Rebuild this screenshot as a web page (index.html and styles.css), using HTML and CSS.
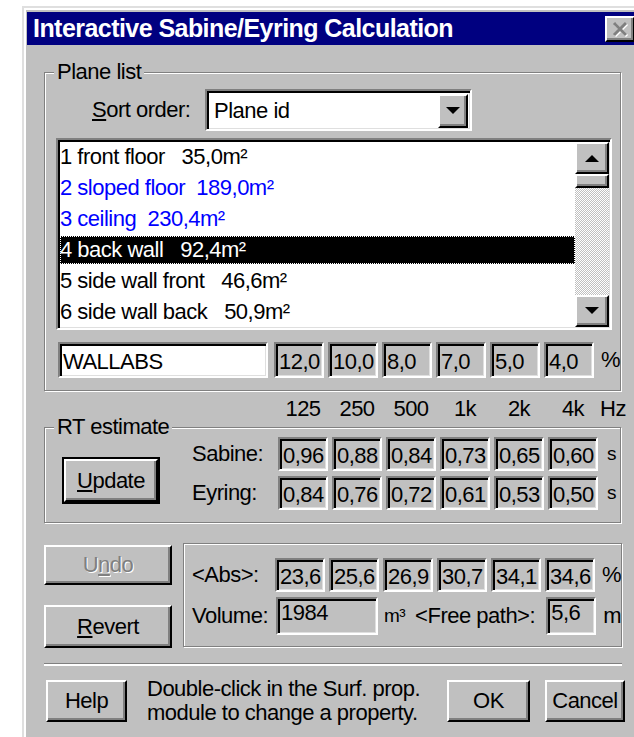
FILE: index.html
```html
<!DOCTYPE html>
<html lang="en">
<head>
<meta charset="utf-8">
<title>Interactive Sabine/Eyring Calculation</title>
<link rel="stylesheet" href="styles.css">
</head>
<body>
<div class="window">
  <div class="titlebar">
    <span class="title">Interactive Sabine/Eyring Calculation</span>
    <span class="btn close">
      <svg width="18" height="16" viewBox="0 0 18 16">
        <path d="M3 2 L15 14 M15 2 L3 14" stroke="#fff" stroke-width="3" transform="translate(1 1)"/>
        <path d="M3 2 L15 14 M15 2 L3 14" stroke="#808080" stroke-width="3"/>
      </svg>
    </span>
  </div>

  <div class="client">
    <fieldset class="group plane">
      <legend>Plane list</legend>
      <div class="sort-row">
        <span class="sort-label"><u>S</u>ort order:</span>
        <div class="combo sunken">
          <span class="combo-text">Plane id</span>
          <span class="btn drop">
            <svg width="14" height="8" viewBox="0 0 14 8"><polygon points="0,0 14,0 7,7" fill="#000"/></svg>
          </span>
        </div>
      </div>

      <div class="listbox sunken">
        <ul class="items">
          <li>1 front floor   35,0m²</li>
          <li class="marked">2 sloped floor  189,0m²</li>
          <li class="marked">3 ceiling  230,4m²</li>
          <li class="selected">4 back wall   92,4m²</li>
          <li>5 side wall front   46,6m²</li>
          <li>6 side wall back   50,9m²</li>
        </ul>
        <div class="scrollbar">
          <span class="btn arrow">
            <svg width="14" height="8" viewBox="0 0 14 8"><polygon points="0,8 14,8 7,1" fill="#000"/></svg>
          </span>
          <span class="btn thumb"></span>
          <span class="track"></span>
          <span class="btn arrow">
            <svg width="14" height="8" viewBox="0 0 14 8"><polygon points="0,0 14,0 7,7" fill="#000"/></svg>
          </span>
        </div>
      </div>

      <div class="value-row material-row">
        <div class="field edit name">WALLABS</div>
        <div class="cells">
          <div class="field">12,0</div>
          <div class="field">10,0</div>
          <div class="field">8,0</div>
          <div class="field">7,0</div>
          <div class="field">5,0</div>
          <div class="field">4,0</div>
        </div>
        <span class="unit">%</span>
      </div>
    </fieldset>

    <div class="freq-row">
      <div class="cells freqs">
        <span>125</span><span>250</span><span>500</span><span>1k</span><span>2k</span><span>4k</span>
      </div>
      <span class="unit hz">Hz</span>
    </div>

    <fieldset class="group rt">
      <legend>RT estimate</legend>
      <div class="rt-body">
        <span class="btn push default"><u>U</u>pdate</span>
        <div class="rt-rows">
          <div class="value-row">
            <span class="row-label">Sabine:</span>
            <div class="cells">
              <div class="field">0,96</div>
              <div class="field">0,88</div>
              <div class="field">0,84</div>
              <div class="field">0,73</div>
              <div class="field">0,65</div>
              <div class="field">0,60</div>
            </div>
            <span class="unit small">s</span>
          </div>
          <div class="value-row">
            <span class="row-label">Eyring:</span>
            <div class="cells">
              <div class="field">0,84</div>
              <div class="field">0,76</div>
              <div class="field">0,72</div>
              <div class="field">0,61</div>
              <div class="field">0,53</div>
              <div class="field">0,50</div>
            </div>
            <span class="unit small">s</span>
          </div>
        </div>
      </div>
    </fieldset>

    <div class="lower">
      <div class="side-buttons">
        <span class="btn push disabled">U<u>n</u>do</span>
        <span class="btn push revert"><u>R</u>evert</span>
      </div>
      <div class="summary">
        <div class="value-row">
          <span class="row-label">&lt;Abs&gt;:</span>
          <div class="cells">
            <div class="field">23,6</div>
            <div class="field">25,6</div>
            <div class="field">26,9</div>
            <div class="field">30,7</div>
            <div class="field">34,1</div>
            <div class="field">34,6</div>
          </div>
          <span class="unit">%</span>
        </div>
        <div class="value-row volume-row">
          <span class="row-label">Volume:</span>
          <div class="field volume">1984</div>
          <span class="m3">m³</span>
          <span class="path-label">&lt;Free path&gt;:</span>
          <div class="field path">5,6</div>
          <span class="unit">m</span>
        </div>
      </div>
    </div>

    <div class="separator"></div>

    <div class="footer">
      <span class="btn push help">Help</span>
      <p class="hint">Double-click in the Surf. prop.<br>module to change a property.</p>
      <span class="btn push ok">OK</span>
      <span class="btn push cancel">Cancel</span>
    </div>
  </div>
</div>
</body>
</html>
```

FILE: styles.css
```css
* {
  box-sizing: border-box;
}

html,
body {
  margin: 0;
  background: #fff;
  overflow: hidden;
}

body {
  width: 634px;
  height: 737px;
  font-family: "Liberation Sans", Arial, sans-serif;
  font-size: 22px;
  letter-spacing: -0.5px;
  white-space: nowrap;
  color: #000;
}

u {
  text-decoration-thickness: 2px;
  text-underline-offset: 2px;
}

/* ---- window frame ---- */
.window {
  margin: 6px 0 0 22px;
  width: 620px;
  height: 740px;
  padding: 4px 3px;
  background: #c0c0c0;
  border: 2px solid;
  border-color: #dfdfdf #000 #000 #dfdfdf;
  box-shadow: inset 2px 2px 0 #fff, inset -2px -2px 0 #808080;
}

.titlebar {
  height: 33px;
  padding-left: 6px;
  display: flex;
  align-items: center;
  justify-content: space-between;
  background: #000080;
  color: #fff;
}

.title {
  font-weight: bold;
  font-size: 25px;
  letter-spacing: -0.55px;
}

/* ---- 3D bevels ---- */
.btn {
  display: flex;
  align-items: center;
  justify-content: center;
  background: #c0c0c0;
  border: 2px solid;
  border-color: #fff #000 #000 #fff;
  box-shadow: inset -2px -2px 0 #808080;
}

.sunken {
  border: 2px solid;
  border-color: #808080 #fff #fff #808080;
  box-shadow: inset 2px 2px 0 #000, inset -1px -1px 0 #dfdfdf;
}

.close {
  width: 30px;
  height: 26px;
  margin-right: 2px;
}

/* ---- client area ---- */
.client {
  padding: 17px 0 0 17px;
}

.group {
  margin: 0;
  padding: 0;
  width: 577px;
  border: 1px solid #808080;
  box-shadow: inset 1px 1px 0 #fff, 1px 1px 0 #fff;
  min-width: 0;
}

.group legend {
  margin-left: 9px;
  padding: 0 3px;
  line-height: 20px;
  background: #c0c0c0;
}

/* ---- plane list ---- */
.plane {
  padding-bottom: 12px;
}

.sort-row {
  display: flex;
  align-items: center;
  margin: 7px 0 0 47px;
}

.sort-label {
  width: 113px;
}

.combo {
  width: 267px;
  height: 42px;
  padding: 2px 2px 1px 2px;
  display: flex;
  align-items: center;
  justify-content: space-between;
  background: #fff;
}

.combo-text {
  padding-left: 5px;
}

.drop {
  width: 30px;
  height: 34px;
}

.listbox {
  margin: 7px 0 0 11px;
  width: 556px;
  height: 192px;
  padding: 2px 1px 1px 2px;
  display: flex;
  background: #fff;
}

.items {
  flex: 1;
  margin: 0;
  padding: 0;
  list-style: none;
  display: grid;
  grid-template-rows: repeat(6, 1fr);
}

.items li {
  padding-left: 0;
  white-space: pre;
  display: flex;
  align-items: center;
}

.items .marked {
  color: #0000ff;
}

.items .selected {
  background: #000;
  color: #fff;
  outline: 1px dotted #fff;
  outline-offset: -1px;
  margin: 1px 0;
}

.scrollbar {
  width: 34px;
  display: flex;
  flex-direction: column;
}

.scrollbar .arrow {
  height: 32px;
}

.scrollbar .thumb {
  height: 14px;
}

.scrollbar .track {
  flex: 1;
  background: repeating-conic-gradient(#fff 0 25%, #c0c0c0 0 50%) 0 0 / 2px 2px;
}

/* ---- value rows ---- */
.value-row {
  display: flex;
  align-items: center;
}

.cells {
  display: grid;
  grid-template-columns: repeat(6, 50px);
  column-gap: 4px;
}

.field {
  height: 34px;
  padding: 2px 0 0 3px;
  line-height: 30px;
  background: #c0c0c0;
  border: 2px solid;
  border-color: #808080 #fff #fff #808080;
  box-shadow: inset 2px 2px 0 #000, inset -1px -1px 0 #dfdfdf;
  overflow: hidden;
}

.field.edit {
  background: #fff;
}

.material-row {
  margin: 12px 0 0 13px;
}

.material-row .field {
  height: 36px;
  line-height: 32px;
}

.name {
  width: 214px;
  margin-right: 6px;
}

.unit {
  margin-left: 7px;
}

.unit.small {
  font-size: 19px;
  margin-left: 9px;
}

.row-label {
  width: 86px;
}

/* ---- frequency header ---- */
.freq-row {
  margin: 5px 0 0 234px;
  height: 26px;
  display: flex;
  align-items: center;
}

.freqs span {
  text-align: center;
}

.hz {
  margin-left: 2px;
}

/* ---- RT estimate ---- */
.rt {
  margin-top: -5px;
  padding-bottom: 12px;
}

.rt-body {
  display: flex;
  align-items: flex-start;
}

.push {
  height: 42px;
}

.default {
  margin: 22px 0 0 19px;
  width: 94px;
  height: 43px;
  box-shadow: inset -2px -2px 0 #808080, 0 0 0 2px #000;
}

.rt-rows {
  margin-left: 34px;
  display: flex;
  flex-direction: column;
  row-gap: 5px;
}

/* ---- lower panel ---- */
.lower {
  margin-top: 20px;
  display: flex;
  align-items: flex-start;
}

.side-buttons {
  width: 128px;
  display: flex;
  flex-direction: column;
  row-gap: 20px;
  padding-top: 2px;
}

.side-buttons .disabled {
  height: 40px;
  color: #808080;
  text-shadow: 1px 1px 0 #fff;
}

.side-buttons .revert {
  height: 43px;
}

.summary {
  margin-left: 11px;
  width: 439px;
  height: 104px;
  padding: 14px 0 0 8px;
  border: 1px solid #808080;
  box-shadow: inset 1px 1px 0 #fff, 1px 1px 0 #fff;
  display: flex;
  flex-direction: column;
  row-gap: 5px;
}

.volume-row .field {
  height: 38px;
  line-height: 28px;
  padding-top: 0;
}

.volume {
  width: 104px;
}

.m3 {
  margin-left: 6px;
  font-size: 19px;
}

.path-label {
  margin-left: 10px;
  width: 134px;
}

.path {
  width: 51px;
}

/* ---- footer ---- */
.separator {
  margin-top: 15px;
  width: 578px;
  border-top: 1px solid #808080;
  border-bottom: 2px solid #fff;
}

.footer {
  margin-top: 14px;
  display: flex;
  align-items: flex-start;
}

.help {
  margin-left: 2px;
  width: 81px;
}

.hint {
  margin: -3px 0 0 20px;
  width: 300px;
  line-height: 24px;
}

.ok {
  width: 83px;
}

.cancel {
  margin-left: 15px;
  width: 80px;
}
```
